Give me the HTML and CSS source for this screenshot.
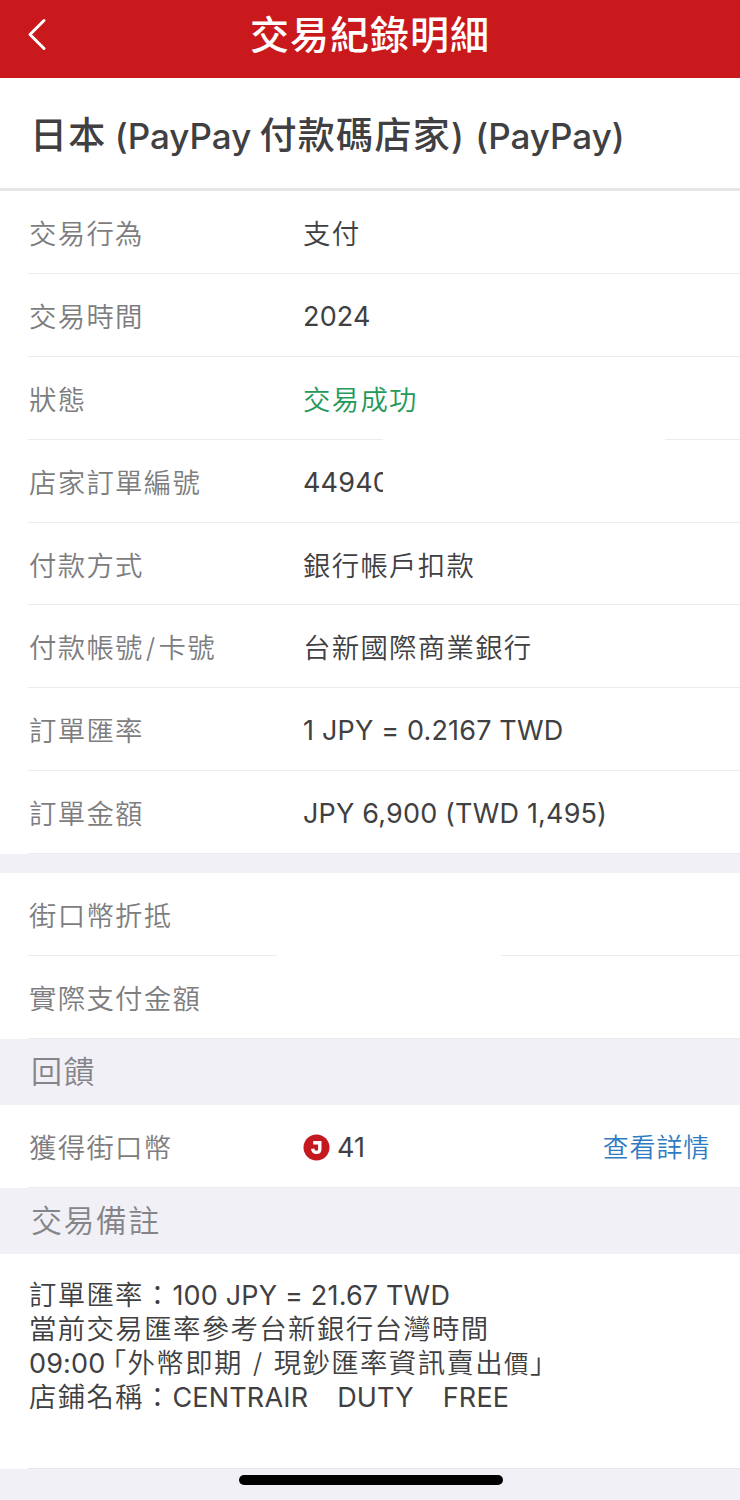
FILE: index.html
```
<!DOCTYPE html>
<html lang="zh-Hant">
<head>
    <meta charset="UTF-8">
    <meta name="viewport" content="width=device-width, initial-scale=1.0">
    <title>交易紀錄明細</title>
    <link rel="stylesheet" href="styles.css">
</head>
<body>
    <header class="navbar">
        <svg class="back" width="24" height="36" viewBox="0 0 24 36">
            <path d="M19 3.5 L5 17.5 L19 31.5" fill="none" stroke="#fff" stroke-width="3" stroke-linecap="round" stroke-linejoin="round"/>
        </svg>
        <h1>交易紀錄明細</h1>
    </header>

    <h2 class="merchant">日本 <span class="latin">(PayPay</span> 付款碼店家<span class="latin">) (PayPay)</span></h2>

    <section class="group">
        <div class="row">
            <span class="label">交易行為</span>
            <span class="value">支付</span>
        </div>
        <div class="row">
            <span class="label">交易時間</span>
            <span class="value latin">2024</span>
        </div>
        <div class="row">
            <span class="label">狀態</span>
            <span class="value success">交易成功</span>
        </div>
        <div class="row">
            <span class="label">店家訂單編號</span>
            <span class="value latin">44940</span>
            <span class="mask mask-order"></span>
        </div>
        <div class="row">
            <span class="label">付款方式</span>
            <span class="value">銀行帳戶扣款</span>
        </div>
        <div class="row">
            <span class="label">付款帳號<span class="slash">/</span>卡號</span>
            <span class="value">台新國際商業銀行</span>
        </div>
        <div class="row">
            <span class="label">訂單匯率</span>
            <span class="value latin">1 JPY = 0.2167 TWD</span>
        </div>
        <div class="row">
            <span class="label">訂單金額</span>
            <span class="value latin">JPY 6,900 (TWD 1,495)</span>
        </div>
    </section>

    <section class="group second">
        <div class="row">
            <span class="label">街口幣折抵</span>
        </div>
        <div class="row">
            <span class="label">實際支付金額</span>
            <span class="mask mask-paid"></span>
        </div>
    </section>

    <h3 class="section-title">回饋</h3>
    <section class="group">
        <div class="row">
            <span class="label">獲得街口幣</span>
            <span class="value latin coin">
                <svg width="27" height="27" viewBox="0 0 27 27">
                    <circle cx="13.5" cy="13.5" r="13" fill="#c41a1f"/>
                    <path d="M10.2 8.8 H16.8 V15.2 Q16.8 18.4 13.3 18.4 Q10.2 18.4 9.6 14.8" fill="none" stroke="#fff" stroke-width="3.4"/>
                </svg>
                41
            </span>
            <a class="detail" href="#">查看詳情</a>
        </div>
    </section>

    <h3 class="section-title">交易備註</h3>
    <section class="group">
        <div class="note">
            <p>訂單匯率：<span class="latin">100 JPY = 21.67 TWD</span></p>
            <p class="wide">當前交易匯率參考台新銀行台灣時間</p>
            <p class="wide"><span class="latin">09:00</span><span class="open">「</span>外幣即期<span class="note-slash">/</span>現鈔匯率資訊賣出<span class="small">價</span>」</p>
            <p>店鋪名稱：<span class="latin words"><span>CENTRAIR</span><span>DUTY</span><span>FREE</span></span></p>
        </div>
    </section>

    <footer class="home-bar"><span></span></footer>
</body>
</html>
```

FILE: styles.css
```
* {
    box-sizing: border-box;
}
body {
    margin: 0;
    height: 1500px;
    overflow: hidden;
    display: flex;
    flex-direction: column;
    background-color: #f1f0f6;
    color: #404042;
    font-family: Inter, "Noto Sans CJK TC", sans-serif;
    font-size: 27.4px;
    font-weight: 350;
    letter-spacing: 1.3px;
}
h1, h2, h3, p {
    margin: 0;
}
.latin {
    font-size: 27px;
    font-weight: 400;
    letter-spacing: 0.17px;
}
.navbar {
    height: 78px;
    padding-bottom: 8px;
    display: grid;
    grid-template-columns: 60px 1fr 60px;
    align-items: center;
    background-color: #c9191d;
    color: #ffffff;
}
.back {
    margin-left: 25px;
}
.navbar h1 {
    text-align: center;
    font-size: 39px;
    font-weight: 500;
    letter-spacing: 1px;
    line-height: 70px;
}
.merchant {
    height: 113px;
    padding-left: 30px;
    line-height: 116px;
    border-bottom: 3px solid #e6e6e8;
    background-color: #ffffff;
    font-size: 37px;
    font-weight: 500;
    letter-spacing: 1.3px;
    word-spacing: -3px;
    white-space: nowrap;
}
.merchant .latin {
    font-size: 35px;
    font-weight: 500;
    letter-spacing: 0;
    word-spacing: 2px;
}
.group {
    padding-left: 28px;
    background-color: #ffffff;
}
.second {
    margin-top: 19px;
}
.row {
    position: relative;
    height: 82.9px;
    display: flex;
    align-items: center;
    border-bottom: 1px solid #ececee;
    white-space: nowrap;
}
.label {
    width: 275px;
    padding-left: 1px;
    color: #7d7d80;
}
.row .latin {
    padding-top: 3px;
}
.slash {
    padding: 0 2px;
}
.success {
    color: #25995a;
}
/* hidden private data */
.mask {
    position: absolute;
    background-color: #ffffff;
}
.mask-order {
    left: 355px;
    top: -4px;
    width: 282px;
    height: 70px;
}
.mask-paid {
    left: 249px;
    top: -4px;
    width: 224px;
    height: 70px;
}
.section-title {
    height: 66px;
    padding-left: 31px;
    line-height: 65px;
    color: #858589;
    font-size: 31px;
    font-weight: 350;
    letter-spacing: 1.4px;
}
.coin {
    display: flex;
    align-items: center;
    gap: 7px;
}
.detail {
    margin-left: auto;
    margin-right: 30px;
    color: #2f7cc4;
    font-size: 26px;
    letter-spacing: 0.8px;
    text-decoration: none;
}
.note {
    height: 215px;
    padding-top: 24px;
    border-bottom: 1px solid #e8e8eb;
    white-space: nowrap;
}
.note p {
    height: 34px;
    padding-left: 1px;
    line-height: 34px;
}
.note .wide {
    letter-spacing: 1.4px;
}
.open {
    padding-left: 7px;
    font-feature-settings: "halt";
}
.note-slash {
    padding: 0 10px;
}
.small {
    font-size: 24.5px;
}
.words {
    display: inline-flex;
    gap: 29px;
}
.home-bar {
    display: flex;
    justify-content: center;
    padding: 6px 0 0 1px;
}
.home-bar span {
    width: 264px;
    height: 10px;
    border-radius: 5px;
    background-color: #000000;
}
```
